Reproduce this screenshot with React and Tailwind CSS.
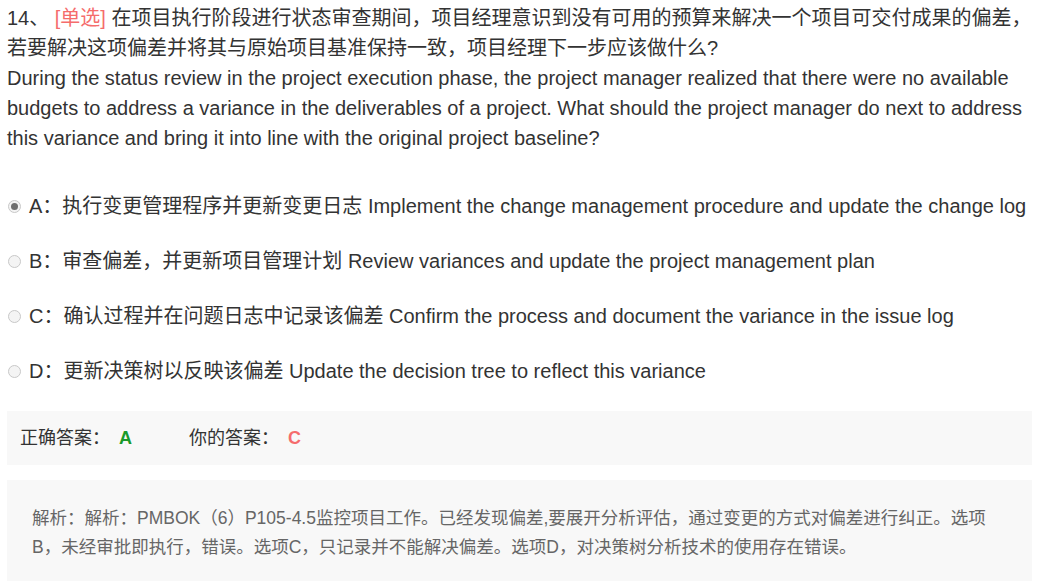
import React from 'react';

const options = [
  { key: 'A', text: '执行变更管理程序并更新变更日志 Implement the change management procedure and update the change log', checked: true },
  { key: 'B', text: '审查偏差，并更新项目管理计划 Review variances and update the project management plan' },
  { key: 'C', text: '确认过程并在问题日志中记录该偏差 Confirm the process and document the variance in the issue log' },
  { key: 'D', text: '更新决策树以反映该偏差 Update the decision tree to reflect this variance' },
];

const Radio = ({ checked }) => (
  <span className="w-[13px] h-[13px] rounded-full border border-[#c8c8c8] bg-[#f4f4f4] flex items-center justify-center shrink-0">
    {checked && <span className="w-[7px] h-[7px] rounded-full bg-[#6f6f6f]"></span>}
  </span>
);

export default function App() {
  return (
    <div
      className="bg-white w-[1041px] h-[581px] overflow-hidden px-[7px] text-[#333]"
      style={{ fontFamily: '"Liberation Sans", Arial, "Noto Sans CJK SC", sans-serif' }}
    >
      {/* Question */}
      <div className="text-[20px] leading-[30px] pt-[3px]">
        <div className="whitespace-nowrap">
          <span>14、 </span>
          <span className="text-[#f56c6c]">[单选]</span>
          <span> 在项目执行阶段进行状态审查期间，项目经理意识到没有可用的预算来解决一个项目可交付成果的偏差，</span>
        </div>
        <div>若要解决这项偏差并将其与原始项目基准保持一致，项目经理下一步应该做什么?</div>
        <div>During the status review in the project execution phase, the project manager realized that there were no available budgets to address a variance in the deliverables of a project. What should the project manager do next to address this variance and bring it into line with the original project baseline?</div>
      </div>

      {/* Options */}
      <div className="mt-[38px] flex flex-col gap-[25px]">
        {options.map((o) => (
          <div key={o.key} className="flex items-center text-[20px] leading-[30px]">
            <span className="ml-[1px] mr-[8px]"><Radio checked={o.checked} /></span>
            <span>{o.key}：{o.text}</span>
          </div>
        ))}
      </div>

      {/* Answer */}
      <div className="mt-[25px] bg-[#f8f8f8] h-[54px] mr-[2px] flex items-center pl-[13px] text-[18px]">
        <span>正确答案：</span>
        <span className="ml-[9px] text-[#1a9a2a] font-bold">A</span>
        <span className="ml-[57px]">你的答案：</span>
        <span className="ml-[9px] text-[#f56c6c] font-bold">C</span>
      </div>

      {/* Analysis */}
      <div className="mt-[15px] bg-[#f8f8f8] mr-[2px] pl-[25px] pr-[40px] pt-[24px] pb-[30px] text-[17.5px] leading-[29px] text-[#666]">
        解析：解析：PMBOK（6）P105-4.5监控项目工作。已经发现偏差,要展开分析评估，通过变更的方式对偏差进行纠正。选项B，未经审批即执行，错误。选项C，只记录并不能解决偏差。选项D，对决策树分析技术的使用存在错误。
      </div>
    </div>
  );
}
